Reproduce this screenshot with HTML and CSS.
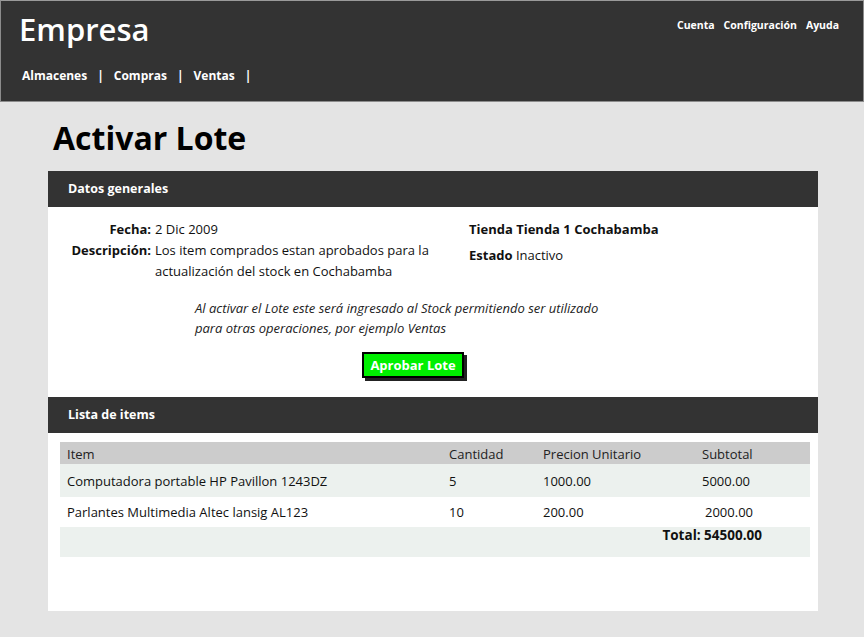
FILE: index.html
```html
<!DOCTYPE html>
<html lang="es">
<head>
<meta charset="utf-8">
<title>Activar Lote</title>
<link rel="stylesheet" href="styles.css">
</head>
<body>
<header class="topbar">
  <div class="topbar-row">
    <div class="logo">Empresa</div>
    <nav class="user-links">
      <a href="#">Cuenta</a>
      <a href="#">Configuración</a>
      <a href="#">Ayuda</a>
    </nav>
  </div>
  <nav class="main-nav">
    <a href="#">Almacenes</a><span class="sep">|</span>
    <a href="#">Compras</a><span class="sep">|</span>
    <a href="#">Ventas</a><span class="sep">|</span>
  </nav>
</header>

<main class="page">
  <h1 class="page-title">Activar Lote</h1>

  <section class="panel">
    <h2 class="panel-bar">Datos generales</h2>
    <div class="info">
      <dl class="info-left">
        <dt>Fecha:</dt>
        <dd>2 Dic 2009</dd>
        <dt>Descripción:</dt>
        <dd>Los item comprados estan aprobados para la actualización del stock en Cochabamba</dd>
      </dl>
      <div class="info-right">
        <div class="info-line"><b>Tienda Tienda 1 Cochabamba</b></div>
        <div class="info-line"><b>Estado</b> Inactivo</div>
      </div>
    </div>
    <div class="action">
      <p class="note">Al activar el Lote este será ingresado al Stock permitiendo ser utilizado para otras operaciones, por ejemplo Ventas</p>
      <button class="btn-approve" type="button">Aprobar Lote</button>
    </div>

    <h2 class="panel-bar bar-items">Lista de items</h2>
    <div class="items">
      <div class="row head">
        <span>Item</span><span>Cantidad</span><span>Precion Unitario</span><span>Subtotal</span>
      </div>
      <div class="row alt first">
        <span>Computadora portable HP Pavillon 1243DZ</span><span>5</span><span>1000.00</span><span>5000.00</span>
      </div>
      <div class="row">
        <span>Parlantes Multimedia Altec lansig AL123</span><span>10</span><span>200.00</span><span class="shift">2000.00</span>
      </div>
      <div class="row alt total-row">
        <span class="total">Total: 54500.00</span>
      </div>
    </div>
  </section>
</main>
</body>
</html>
```

FILE: styles.css
```css
* { box-sizing: border-box; }

html, body {
  margin: 0;
  padding: 0;
}

body {
  background: #e4e4e4;
  font-family: "Open Sans", "DejaVu Sans", sans-serif;
  color: #111;
  height: 637px;
  overflow: hidden;
}

a { color: inherit; text-decoration: none; }

/* ---------- Top bar ---------- */
.topbar {
  height: 102px;
  background: #333333;
  border: 1px solid #8c8c8c;
  border-top-color: #9a9a9a;
  color: #fff;
  padding: 8px 24px 0 18px;
}

.topbar-row {
  display: flex;
  justify-content: space-between;
  align-items: flex-start;
}

.logo {
  font-size: 31px;
  font-weight: 600;
  line-height: 40px;
}

.user-links {
  display: flex;
  gap: 9px;
  margin-top: 9px;
  font-size: 10.5px;
  font-weight: 700;
  line-height: 15px;
}

.main-nav {
  display: flex;
  align-items: center;
  margin-top: 19px;
  padding-left: 3px;
  font-size: 12px;
  font-weight: 700;
  line-height: 16px;
}

.main-nav .sep {
  margin: 0 10px 0 10px;
}

/* ---------- Page ---------- */
.page {
  padding: 0 46px 0 48px;
}

.page-title {
  margin: 16px 0 13px 5px;
  font-size: 32px;
  line-height: 40px;
  font-weight: 700;
  color: #000;
}

.panel {
  background: #fff;
  height: 440px;
}

.panel-bar {
  margin: 0;
  height: 36px;
  background: #333333;
  color: #fff;
  font-size: 12.5px;
  font-weight: 700;
  line-height: 36px;
  padding-left: 20px;
}

.info {
  display: flex;
  padding-top: 12px;
}

.info-left {
  margin: 0;
  display: grid;
  grid-template-columns: 103px 275px;
  column-gap: 4px;
  font-size: 13px;
  line-height: 21px;
}

.info-left dt {
  text-align: right;
  font-weight: 700;
  white-space: nowrap;
}

.info-left dd {
  margin: 0;
}

.info-right {
  margin-left: 39px;
  display: flex;
  flex-direction: column;
  gap: 5px;
  font-size: 13px;
  line-height: 21px;
}

.action {
  width: 440px;
  margin: 16px 0 0 147px;
  display: flex;
  flex-direction: column;
  align-items: center;
}

.note {
  margin: 0;
  align-self: stretch;
  padding-right: 30px;
  font-style: italic;
  font-size: 13px;
  line-height: 20px;
  color: #222;
}

.btn-approve {
  margin-top: 14px;
  width: 102px;
  height: 26px;
  padding: 0;
  background: #00f000;
  border: 2px solid #000;
  box-shadow: 3px 3px 0 #222;
  color: #fff;
  font-family: inherit;
  font-size: 13px;
  font-weight: 700;
  line-height: 20px;
  transform: translateX(-2px);
}

.bar-items {
  margin-top: 19px;
}

/* ---------- Items table ---------- */
.items {
  margin: 9px 8px 0 12px;
  font-size: 13px;
}

.row {
  display: grid;
  grid-template-columns: 389px 94px 159px 1fr;
  height: 30px;
  align-items: center;
}

.row span:first-child {
  padding-left: 7px;
}

.row.head {
  height: 22px;
  background: #cccccc;
  align-items: end;
  line-height: 20px;
  color: #222;
}

.row.first {
  height: 33px;
}

.row.alt {
  background: #ecf1ee;
}

.row .shift {
  padding-left: 3px;
}

.total-row {
  display: flex;
  justify-content: flex-end;
  align-items: flex-start;
  padding-right: 48px;
}

.row span.total {
  font-weight: 700;
  font-size: 13.5px;
  line-height: 16px;
  padding-left: 0;
}
```
